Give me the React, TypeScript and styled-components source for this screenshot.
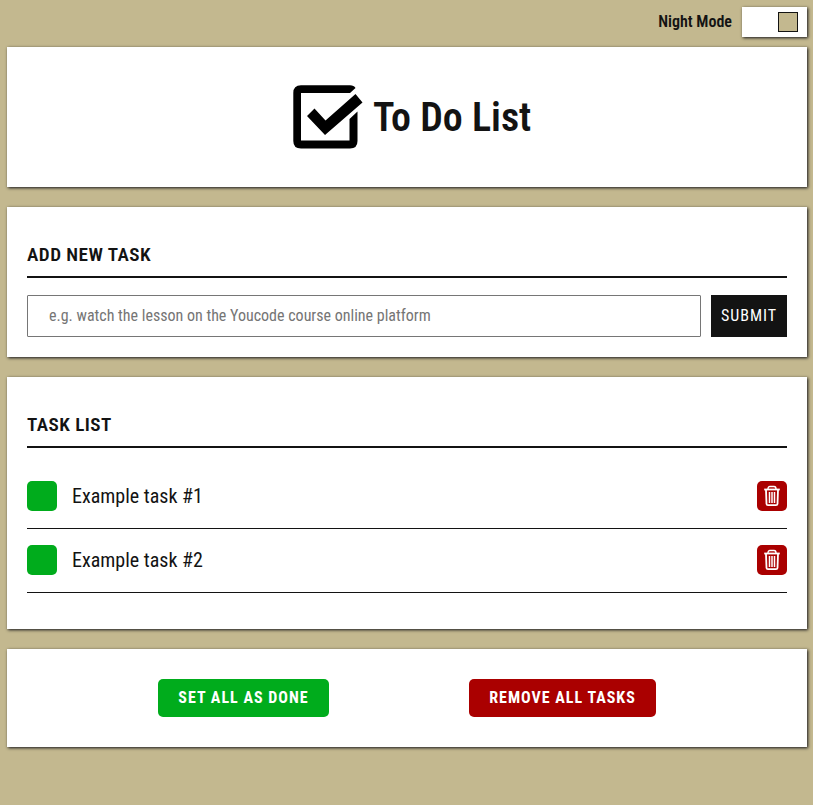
import React from "react";
import styled, { createGlobalStyle } from "styled-components";

const ink = "#131313";
const sand = "#c3b88f";
const green = "#00ac1c";
const red = "#aa0000";

const GlobalStyle = createGlobalStyle`
  *, *::before, *::after { box-sizing: border-box; }
  html { background: ${sand}; }
  body {
    margin: 0;
    color: ${ink};
    font-family: "Roboto Condensed", Roboto, sans-serif;
    font-stretch: 75%;
    font-size: 16px;
  }
  button, input { font: inherit; font-stretch: 75%; letter-spacing: inherit; }
`;

const Page = styled.div`
  width: 800px;
  margin-left: 7px;
  padding-top: 7px;
  display: flex;
  flex-direction: column;
`;

const shadow = "1px 1px 3px #131318";

const ModeBar = styled.div`
  display: flex;
  justify-content: flex-end;
  align-items: center;
  gap: 10px;
  height: 30px;
  margin-bottom: 10px;
  font-weight: 600;
  line-height: 30px;
`;

const Toggle = styled.button`
  display: flex;
  justify-content: flex-end;
  align-items: center;
  width: 65px;
  height: 30px;
  padding: 0 9px;
  border: 0;
  background: #fff;
  box-shadow: ${shadow};
`;

const Knob = styled.span`
  width: 20px;
  height: 20px;
  border: 1px solid ${ink};
  background: ${sand};
`;

const Card = styled.section<{ $height: number }>`
  height: ${(p) => p.$height}px;
  padding: 0 20px;
  margin-bottom: 20px;
  background: #fff;
  box-shadow: ${shadow};
`;

const Banner = styled(Card)`
  display: flex;
  justify-content: center;
  align-items: center;
  gap: 10px;
  padding: 0 0 0 10px;
`;

const Title = styled.h1`
  width: 158px;
  margin: 0;
  padding-top: 2px;
  font-size: 40px;
  font-weight: 600;
  line-height: 48px;
  white-space: nowrap;
`;

const Heading = styled.h2`
  margin: 0;
  padding-top: 36px;
  height: 71px;
  border-bottom: 2px solid ${ink};
  font-size: 19.2px;
  font-weight: 600;
  line-height: 23px;
  letter-spacing: 0.45px;
  text-transform: uppercase;
`;

const Form = styled.form`
  display: flex;
  gap: 10px;
  margin-top: 17px;
  height: 42px;
`;

const Input = styled.input`
  flex: 1;
  padding: 0 21px 2px;
  border: 1px solid #767676;
  border-radius: 1px;
  background: #fff;
  &::placeholder { color: #757575; }
`;

const Submit = styled.button`
  width: 76px;
  padding: 0 0 2px;
  border: 0;
  background: ${ink};
  color: #fff;
  letter-spacing: 1px;
`;

const Tasks = styled.ul`
  margin: 17px 0 0;
  padding: 0;
  list-style: none;
`;

const Task = styled.li`
  display: flex;
  align-items: center;
  height: 64px;
  padding-bottom: 2px;
  border-bottom: 1px solid ${ink};
  font-size: 20px;
`;

const TaskName = styled.span`
  flex: 1;
  margin-left: 15px;
  font-weight: 400;
`;

const Square = styled.button<{ $color: string }>`
  display: flex;
  justify-content: center;
  align-items: center;
  width: 30px;
  height: 30px;
  padding: 0;
  border: 0;
  border-radius: 5px;
  background: ${(p) => p.$color};
`;

const Actions = styled(Card)`
  display: flex;
  justify-content: center;
  align-items: center;
  gap: 140px;
`;

const Action = styled.button<{ $color: string; $width: number }>`
  width: ${(p) => p.$width}px;
  height: 38px;
  padding: 0 0 2px;
  border: 0;
  border-radius: 5px;
  background: ${(p) => p.$color};
  color: #fff;
  font-weight: 700;
  letter-spacing: 1px;
  white-space: nowrap;
`;

const CheckLogo = () => (
  <svg width="70" height="64" viewBox="0 0 70 64" aria-hidden="true">
    <path
      d="M62.5 3 L57 8 H8 V55.5 H56.5 V34 L64.5 26.5 V56 Q64.5 63.5 57 63.5 H8 Q0.3 63.5 0.3 56 V8 Q0.3 0.3 8 0.3 H57 Q61 0.3 62.5 3 Z"
      fill="#000"
    />
    <path d="M14 31 L21.5 23.5 L32.5 35.5 L62.5 9 L69.5 17.5 L32 50 Z" fill="#000" />
  </svg>
);

const TrashIcon = () => (
  <svg width="18" height="22" viewBox="0 0 18 22" fill="none" stroke="#fff" aria-hidden="true">
    <path d="M1.2 4.5 H16.8" strokeWidth="1.8" />
    <path d="M5 4 Q5 1.5 7 1.5 H11 Q13 1.5 13 4" strokeWidth="1.4" />
    <path d="M3 5 L3.5 19 Q3.6 20.2 5 20.2 H13 Q14.4 20.2 14.5 19 L15 5" strokeWidth="1.8" />
    <path d="M6.5 7 V18 M9 7 V18 M11.5 7 V18" strokeWidth="1.5" />
  </svg>
);

export default function App() {
  return (
    <>
      <GlobalStyle />
      <Page>
        <ModeBar>
          <span>Night Mode</span>
          <Toggle aria-label="Night Mode"><Knob /></Toggle>
        </ModeBar>
        <Banner $height={140}>
          <CheckLogo />
          <Title>To Do List</Title>
        </Banner>
        <Card $height={150}>
          <Heading>Add new task</Heading>
          <Form onSubmit={(e: React.FormEvent) => e.preventDefault()}>
            <Input placeholder="e.g. watch the lesson on the Youcode course online platform" />
            <Submit>SUBMIT</Submit>
          </Form>
        </Card>
        <Card $height={252}>
          <Heading>Task list</Heading>
          <Tasks>
            {["Example task #1", "Example task #2"].map((name) => (
              <Task key={name}>
                <Square $color={green} aria-label="Done" />
                <TaskName>{name}</TaskName>
                <Square $color={red} aria-label="Remove"><TrashIcon /></Square>
              </Task>
            ))}
          </Tasks>
        </Card>
        <Actions $height={98}>
          <Action $color={green} $width={171}>SET ALL AS DONE</Action>
          <Action $color={red} $width={187}>REMOVE ALL TASKS</Action>
        </Actions>
      </Page>
    </>
  );
}
